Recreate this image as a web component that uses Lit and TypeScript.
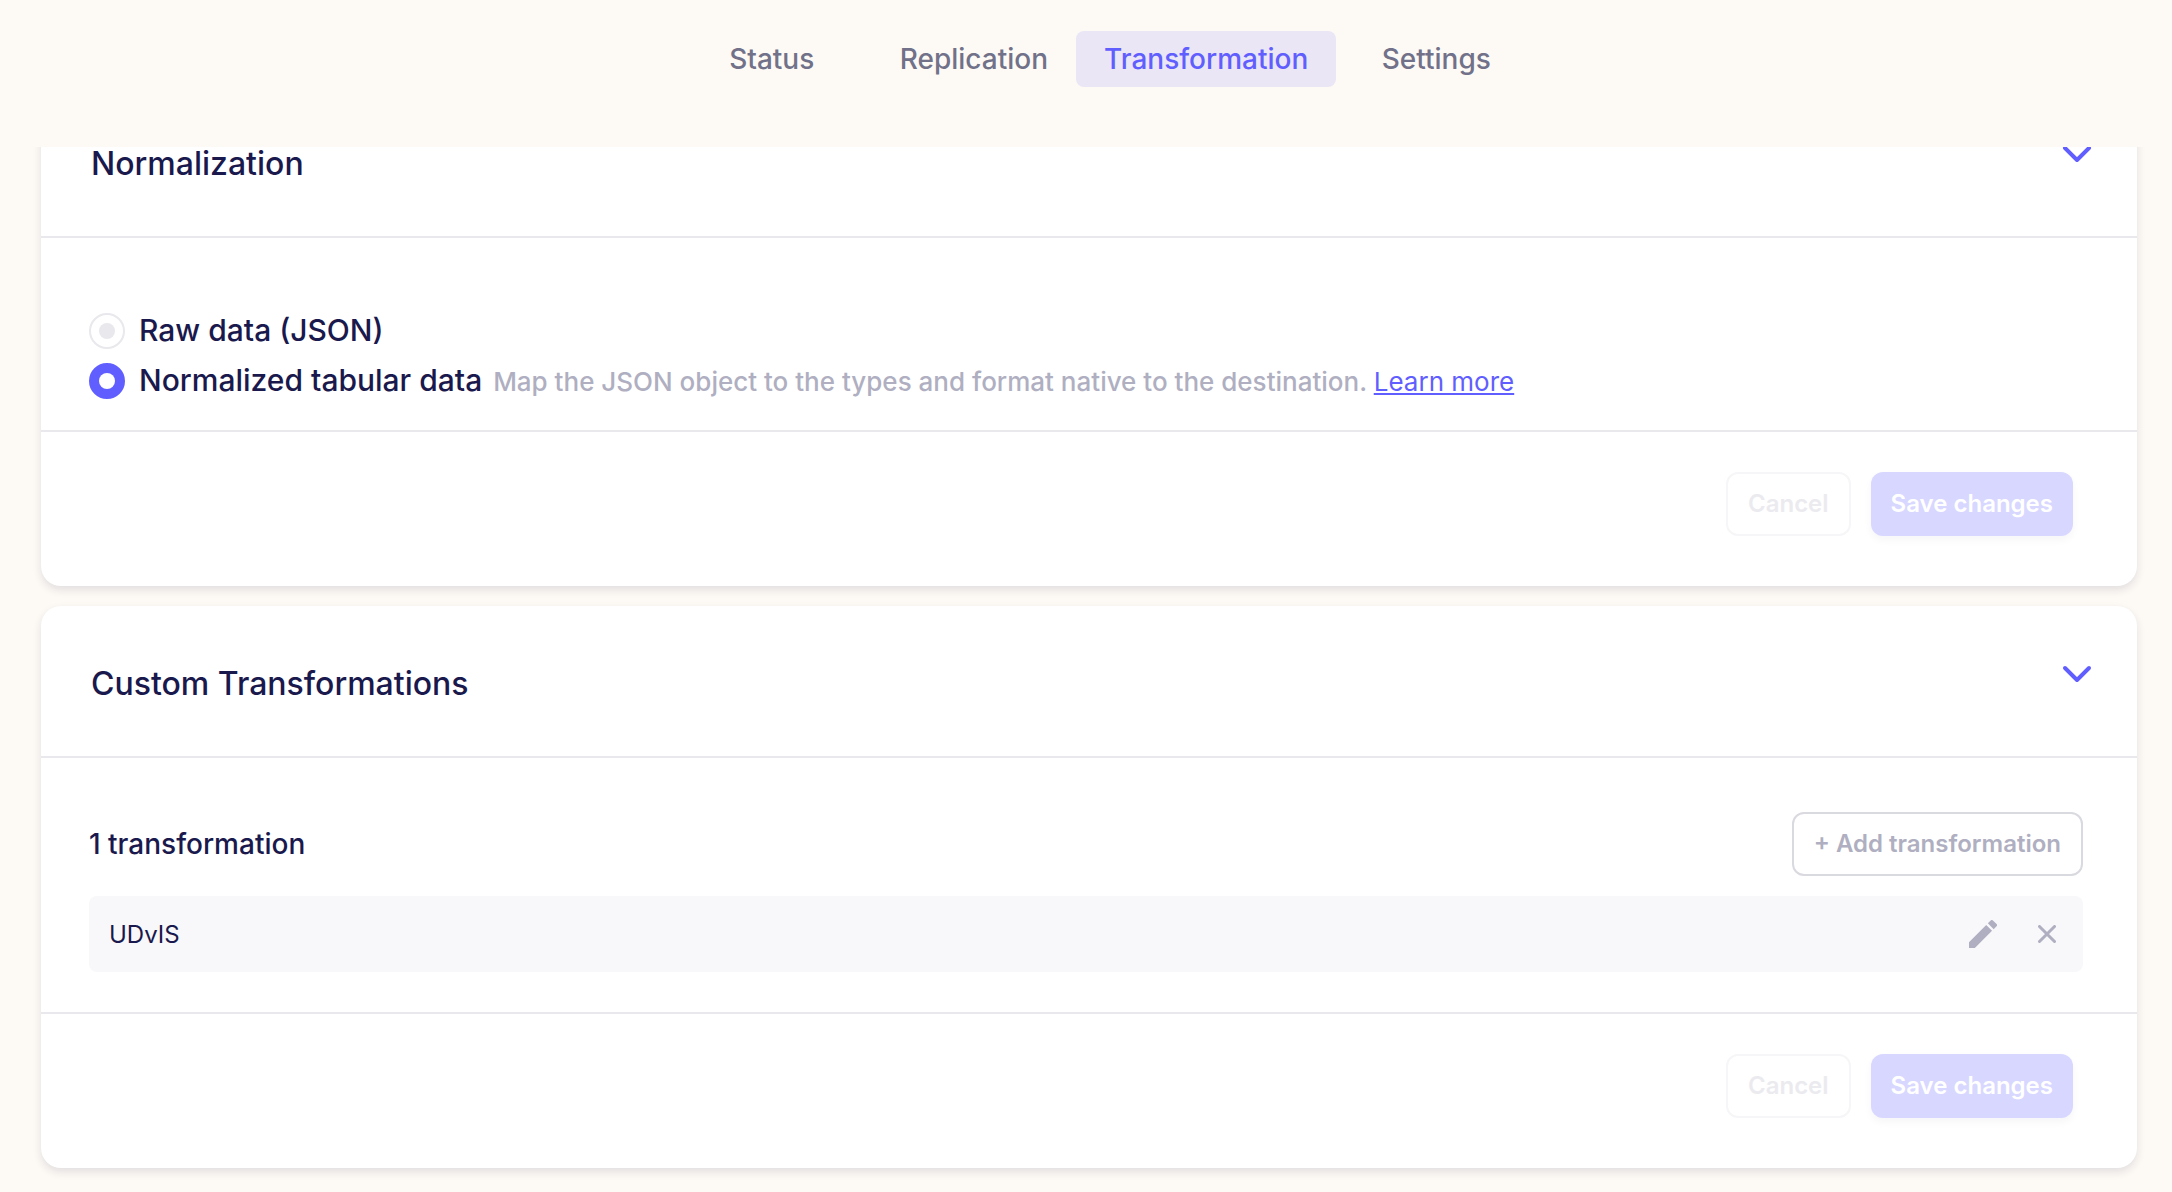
import { LitElement, html, css, nothing } from "lit";
import { customElement, property } from "lit/decorators.js";

const TABS = ["Status", "Replication", "Transformation", "Settings"];

@customElement("section-card")
class SectionCard extends LitElement {
  @property() heading = "";

  static styles = css`
    :host {
      display: block;
      background: #fff;
      border-radius: 20px;
      box-shadow: 0 4px 8px rgba(26, 25, 77, 0.12);
    }
    .header {
      display: flex;
      justify-content: space-between;
      align-items: flex-start;
      padding: 58px 44px 52px 50px;
      border-bottom: 2px solid #e8e8ed;
    }
    .title {
      margin: 0;
      font-size: 32px;
      line-height: 40px;
      font-weight: 500;
    }
    .toggle {
      border: 0;
      padding: 0;
      background: none;
      color: #615eff;
    }
    .toggle svg {
      display: block;
    }
    .footer {
      display: flex;
      justify-content: flex-end;
      gap: 20px;
      padding: 40px 64px 50px;
      border-top: 2px solid #e8e8ed;
    }
    .button {
      box-sizing: border-box;
      height: 64px;
      padding: 0 20px;
      border: 0;
      border-radius: 12px;
      font: 600 24px/30px Inter, "Liberation Sans", sans-serif;
    }
    .cancel {
      background: #fff;
      border: 2px solid #f6f6f8;
      color: #ebebef;
    }
    .save {
      background: #d8d7ff;
      color: #fff;
      box-shadow: 0 4px 8px rgba(26, 25, 77, 0.04);
    }
  `;

  render() {
    return html`
      <header class="header">
        <h2 class="title">${this.heading}</h2>
        <button class="toggle" aria-label="Collapse ${this.heading}">
          <svg width="32" height="20" viewBox="0 0 32 20" fill="none" stroke="currentColor"
            stroke-width="4" stroke-linecap="round" stroke-linejoin="round">
            <path d="M4 4l12 12 12-12" />
          </svg>
        </button>
      </header>
      <slot></slot>
      <footer class="footer">
        <button class="button cancel" disabled>Cancel</button>
        <button class="button save" disabled>Save changes</button>
      </footer>
    `;
  }
}

@customElement("app-root")
class AppRoot extends LitElement {
  static styles = css`
    :host {
      display: flex;
      flex-direction: column;
      min-height: 100vh;
      background: #fdfaf5;
      color: #1a194d;
      font-family: Inter, "Liberation Sans", sans-serif;
    }
    .tabs {
      display: flex;
      justify-content: center;
      padding: 31px 0 60px 36px;
    }
    .tab {
      box-sizing: border-box;
      min-width: 200px;
      padding: 11px 28px;
      border-radius: 8px;
      font-size: 28px;
      line-height: 34px;
      font-weight: 500;
      text-align: center;
      text-decoration: none;
      color: #717189;
    }
    .tab.active {
      background: #eae6f5;
      color: #615eff;
    }
    .content {
      flex: 1;
      overflow: hidden;
      padding: 0 35px 24px 41px;
    }
    /* The list rests partly scrolled under the tab bar. */
    .cards {
      display: flex;
      flex-direction: column;
      gap: 20px;
      margin-top: -61px;
    }
    .options {
      display: flex;
      flex-direction: column;
      gap: 14px;
      padding: 75px 48px 31px;
    }
    .option {
      display: flex;
      align-items: center;
      height: 36px;
    }
    .radio {
      appearance: none;
      flex: none;
      box-sizing: border-box;
      display: grid;
      place-items: center;
      width: 36px;
      height: 36px;
      margin: 0 14px 0 0;
      border: 2px solid #e8e8ed;
      border-radius: 50%;
      background: #fff;
    }
    .radio::before {
      content: "";
      width: 16px;
      height: 16px;
      border-radius: 50%;
      background: #e8e8ed;
    }
    .radio:checked {
      border-color: #615eff;
      background: #615eff;
    }
    .radio:checked::before {
      background: #fff;
    }
    .line {
      font-size: 26px;
      line-height: 36px;
      font-weight: 500;
      color: #afafc1;
    }
    .label {
      margin-right: 4px;
      font-size: 30px;
      color: #1a194d;
    }
    .link {
      font-weight: 400;
      color: #615eff;
    }
    .list {
      padding: 54px 54px 40px 48px;
    }
    .list-head {
      display: flex;
      justify-content: space-between;
      align-items: center;
      margin-bottom: 20px;
      font-size: 28px;
      font-weight: 500;
    }
    .add {
      box-sizing: border-box;
      height: 64px;
      padding: 0 20px;
      border: 2px solid #d9d9e0;
      border-radius: 12px;
      background: #fff;
      color: #afafc1;
      font: 600 24px/30px Inter, "Liberation Sans", sans-serif;
    }
    .item {
      display: flex;
      align-items: center;
      height: 76px;
      padding: 0 20px;
      border-radius: 8px;
      background: #f8f8fa;
      font-size: 24px;
    }
    .name {
      flex: 1;
    }
    .icon {
      display: grid;
      place-items: center;
      width: 32px;
      height: 32px;
      margin-left: 32px;
      padding: 0;
      border: 0;
      background: none;
      color: #afafc1;
    }
  `;

  private option(id: string, label: string, checked: boolean, note: unknown = nothing) {
    return html`
      <div class="option">
        <input class="radio" type="radio" name="normalization" id=${id} .checked=${checked} />
        <span class="line"><label class="label" for=${id}>${label}</label> ${note}</span>
      </div>
    `;
  }

  render() {
    return html`
      <nav class="tabs">
        ${TABS.map(
          (t) => html`<a class="tab ${t === "Transformation" ? "active" : ""}" href="#${t.toLowerCase()}">${t}</a>`
        )}
      </nav>
      <main class="content">
        <div class="cards">
          <section-card heading="Normalization">
            <div class="options">
              ${this.option("raw", "Raw data (JSON)", false)}
              ${this.option(
                "basic",
                "Normalized tabular data",
                true,
                html`Map the JSON object to the types and format native to the destination.
                  <a class="link" href="#learn-more">Learn more</a>`
              )}
            </div>
          </section-card>
          <section-card heading="Custom Transformations">
            <div class="list">
              <div class="list-head">
                <span>1 transformation</span>
                <button class="add">+ Add transformation</button>
              </div>
              <div class="item">
                <span class="name">UDvIS</span>
                <button class="icon" aria-label="Edit transformation">
                  <svg width="28" height="28" viewBox="3 3 18 18" fill="currentColor">
                    <path d="M3 17.25V21h3.75L17.81 9.94l-3.75-3.75L3 17.25zM20.71 7.04a1 1 0 0 0 0-1.41l-2.34-2.34a1 1 0 0 0-1.41 0l-1.83 1.83 3.75 3.75 1.83-1.83z" />
                  </svg>
                </button>
                <button class="icon" aria-label="Remove transformation">
                  <svg width="18" height="18" viewBox="0 0 18 18" fill="none" stroke="currentColor"
                    stroke-width="3" stroke-linecap="round">
                    <path d="M1.5 1.5l15 15M16.5 1.5l-15 15" />
                  </svg>
                </button>
              </div>
            </div>
          </section-card>
        </div>
      </main>
    `;
  }
}
